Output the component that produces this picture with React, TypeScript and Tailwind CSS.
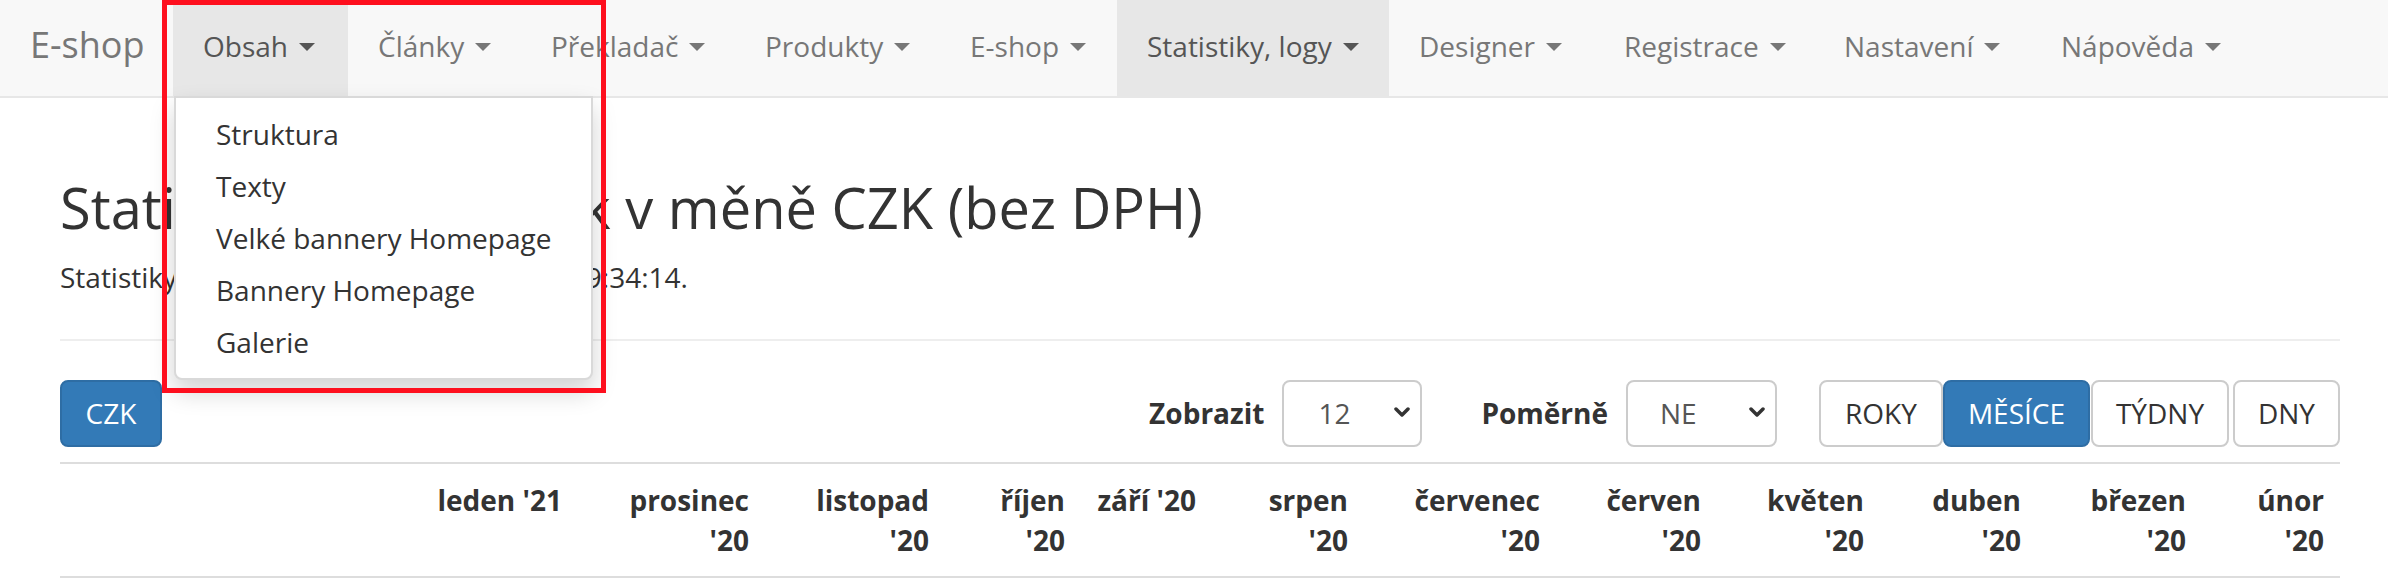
import React from 'react';

interface NavItem {
  label: string;
  w: string;
  active?: boolean;
  open?: boolean;
}

const NAV: NavItem[] = [
  { label: 'Obsah', w: 'w-[175px]', active: true, open: true },
  { label: 'Články', w: 'w-[173px]' },
  { label: 'Překladač', w: 'w-[214px]' },
  { label: 'Produkty', w: 'w-[205px]' },
  { label: 'E-shop', w: 'w-[177px]' },
  { label: 'Statistiky, logy', w: 'w-[272px]', active: true },
  { label: 'Designer', w: 'w-[205px]' },
  { label: 'Registrace', w: 'w-[220px]' },
  { label: 'Nastavení', w: 'w-[217px]' },
  { label: 'Nápověda', w: 'w-[220px]' },
];

const MENU = ['Struktura', 'Texty', 'Velké bannery Homepage', 'Bannery Homepage', 'Galerie'];

// months in table head; two entries = wrapped onto 2 lines
const MONTHS: string[][] = [
  ["leden '21"],
  ['prosinec', "'20"],
  ['listopad', "'20"],
  ['říjen', "'20"],
  ["září '20"],
  ['srpen', "'20"],
  ['červenec', "'20"],
  ['červen', "'20"],
  ['květen', "'20"],
  ['duben', "'20"],
  ['březen', "'20"],
  ['únor', "'20"],
];

function Caret() {
  return (
    <span className="inline-block ml-[11px] w-0 h-0 border-t-[8px] border-t-current border-x-[8px] border-x-transparent align-middle -translate-y-[3px]" />
  );
}

function Chevron() {
  return (
    <svg width="20" height="12" viewBox="0 0 20 12" className="shrink-0">
      <polyline points="4,2 10,8 16,2" fill="none" stroke="#333" strokeWidth="3.5" strokeLinecap="round" strokeLinejoin="round" />
    </svg>
  );
}

function Select({ value, w, pl }: { value: string; w: string; pl: string }) {
  return (
    <div className={`${w} ${pl} h-[67px] pr-[8px] flex items-center justify-between bg-white border-2 border-[#ccc] rounded-[8px] text-[28px] text-[#555]`}>
      <span>{value}</span>
      <Chevron />
    </div>
  );
}

export default function App() {
  return (
    <div className="relative w-[2388px] h-[588px] overflow-hidden bg-white font-['Open_Sans',sans-serif] text-[#333]">
      {/* Navbar */}
      <div className="h-[98px] bg-[#f8f8f8] border-b-2 border-[#e7e7e7] flex">
        <div className="w-[173px] pl-[30px] pt-[25px] text-[36px] leading-[40px] text-[#777]">E-shop</div>
        {NAV.map(item => (
          <div
            key={item.label}
            className={`relative ${item.w} h-[96px] pl-[30px] pt-[26px] text-[28px] leading-[40px] whitespace-nowrap
              ${item.active ? 'bg-[#e7e7e7] text-[#555]' : 'text-[#777]'}`}
          >
            {item.label}
            <Caret />
            {item.open && (
              <div className="absolute z-10 left-[1px] top-[96px] w-[419px] py-[10px] bg-white border-2 border-[rgba(0,0,0,0.15)] rounded-b-[8px] shadow-[0_12px_24px_rgba(0,0,0,0.175)]">
                {MENU.map(m => (
                  <div key={m} className="px-[40px] py-[6px] text-[28px] leading-[40px] text-[#333]">{m}</div>
                ))}
              </div>
            )}
          </div>
        ))}
      </div>

      {/* Content */}
      <div className="pl-[60px]">
        <div className="w-[2280px]">
          <h1 className="mt-[79px] text-[56px] leading-[1.1] font-normal whitespace-nowrap">
            Statistiky objednávek v měně CZK (bez DPH)
          </h1>
          <p className="mt-[18px] text-[28px] leading-[40px] whitespace-nowrap">
            Statistiky byly vygenerovány 1. 2. 2021 v 9:34:14.
          </p>
          <div className="mt-[42px] h-[2px] bg-[#eee]" />

          {/* Toolbar */}
          <div className="mt-[39px] flex items-center">
            <div className="w-[102px] h-[67px] flex items-center justify-center bg-[#337ab7] border-2 border-[#2e6da4] rounded-[8px] text-white text-[28px]">
              CZK
            </div>
            <div className="ml-auto flex items-center">
              <span className="text-[28px] font-bold">Zobrazit</span>
              <div className="ml-[18px]">
                <Select value="12" w="w-[140px]" pl="pl-[34px]" />
              </div>
              <span className="ml-[59px] text-[28px] font-bold">Poměrně</span>
              <div className="ml-[18px]">
                <Select value="NE" w="w-[151px]" pl="pl-[32px]" />
              </div>
              <div className="ml-[42px] flex items-center text-[28px]">
                <div className="w-[124px] h-[67px] flex items-center justify-center bg-white border-2 border-[#ccc] rounded-[8px]">ROKY</div>
                <div className="w-[147px] h-[67px] flex items-center justify-center bg-[#337ab7] border-2 border-[#2e6da4] rounded-[8px] text-white">MĚSÍCE</div>
                <div className="ml-[1px] w-[138px] h-[67px] flex items-center justify-center bg-white border-2 border-[#ccc] rounded-[8px]">TÝDNY</div>
                <div className="ml-[4px] w-[107px] h-[67px] flex items-center justify-center bg-white border-2 border-[#ccc] rounded-[8px]">DNY</div>
              </div>
            </div>
          </div>

          {/* Table head */}
          <div className="mt-[15px] border-t-2 border-b-2 border-[#ddd] grid grid-cols-[348px_170px_187px_180px_136px_131px_152px_192px_161px_163px_157px_165px_138px]">
            <div />
            {MONTHS.map(lines => (
              <div key={lines[0]} className="px-[16px] py-[16px] text-right text-[28px] leading-[40px] font-bold whitespace-nowrap">
                {lines.map(l => (
                  <div key={l}>{l}</div>
                ))}
              </div>
            ))}
          </div>
        </div>
      </div>

      {/* red annotation frame */}
      <div className="absolute z-20 left-[162px] top-0 w-[444px] h-[393px] border-[5px] border-[#fe0f1e]" />
    </div>
  );
}
